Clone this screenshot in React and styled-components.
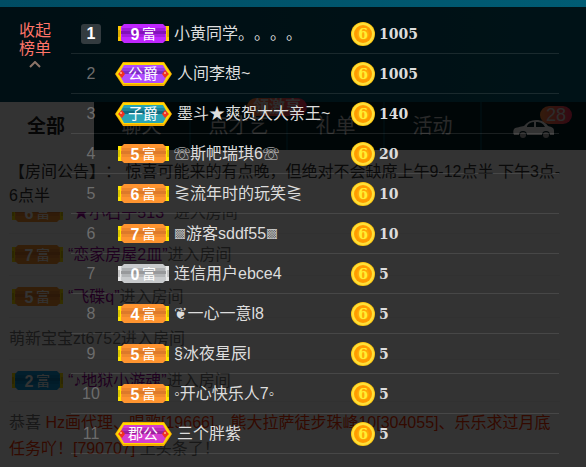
import React, { useState } from "react";
import styled, { createGlobalStyle } from "styled-components";

const ranking = [
  { badge: "purple", level: "9", name: "小黄同学。。。。", coins: 1005 },
  { badge: "violet", title: "公爵", name: "人间李想~", coins: 1005 },
  { badge: "teal", title: "子爵", name: "墨斗★爽贺大大亲王~", coins: 140 },
  { badge: "orange", level: "5", name: "斯帊瑞琪6", mark: "☏", coins: 20 },
  { badge: "orange", level: "6", name: "流年时的玩笑", mark: "⋛", coins: 10 },
  {
    badge: "orange",
    level: "7",
    name: "游客sddf55",
    mark: "▩",
    small: true,
    coins: 10,
  },
  { badge: "silver", level: "0", name: "连信用户ebce4", coins: 5 },
  { badge: "orange", level: "4", name: "❦一心一意l8", coins: 5 },
  { badge: "orange", level: "5", name: "§冰夜星辰l", coins: 5 },
  { badge: "orange", level: "5", name: "开心快乐人7", mark: "◦", coins: 5 },
  { badge: "magenta", title: "郡公", name: "三个胖紫", coins: 5 },
];

const notice =
  "【房间公告】\uFF1A 惊喜可能来的有点晚\uFF0C但绝对不会缺席上午9-12点半 下午3点-";

const headline =
  "Hz画代理、唱歌[19666]、熊大拉萨徒步珠峰10[304055]、乐乐求过月底任务吖\uFF01[790707]";

const messages = [
  { badge: "orange", level: "6", name: "★小石子513", space: true },
  { badge: "orange", level: "7", name: "恋家房屋2皿" },
  { badge: "orange", level: "5", name: "飞碟q" },
  { guest: "萌新宝宝zt6752" },
  { badge: "blue", level: "2", name: "♪地狱小游魂" },
];

const palette = {
  purple: { base: "#c026ff", dark: "#7d10b4", side: "#ffc800" },
  orange: { base: "#ff9430", dark: "#d9772a", side: "#ffe600" },
  silver: { base: "#c8cacc", dark: "#929496", side: "#e8e8e8" },
  blue: { base: "#0a9be0", dark: "#0679b4", side: "#ffe600" },
  violet: { base: "#b04cff", dark: "#7a2cc4" },
  teal: { base: "#2aa3b4", dark: "#0f6c80" },
  magenta: { base: "#d63ccf", dark: "#9c1f9c" },
};

const LevelBadge = ({ color, level }) => {
  const c = palette[color];
  return (
    <StLevel viewBox="0 0 51 19">
      <rect x="0" y="2" width="6" height="15" fill={c.side} />
      <rect x="45" y="2" width="6" height="15" fill={c.side} />
      <rect x="0" y="6" width="2" height="7" fill="#000" opacity="0.15" />
      <rect x="49" y="6" width="2" height="7" fill="#000" opacity="0.15" />
      <path d="M6 0H45L48 3V16L45 19H6L3 16V3Z" fill={c.base} />
      <path d="M4 4H47V7H4Z" fill={c.dark} opacity="0.5" />
      <path d="M3 7H48V10H3Z" fill={c.dark} opacity="0.9" />
      <path d="M4 10H47V13H4Z" fill={c.dark} opacity="0.4" />
      <StLevelText x="17" y="16">
        {level}
      </StLevelText>
      <StBadgeText x="31" y="15" $size={14}>
        富
      </StBadgeText>
    </StLevel>
  );
};

const TitleBadge = ({ color, title }) => {
  const c = palette[color];
  return (
    <StTitle viewBox="0 0 57 24">
      <path d="M8 0H49L57 12L49 24H8L0 12Z" fill="#f5a800" />
      <path d="M8 1H49L56 12L49 22H8L1 12Z" fill="#ffd900" />
      <path d="M9 3H48L53 12L48 21H9L4 12Z" fill={c.base} />
      <path d="M8 6H49L51 9H6Z" fill={c.dark} opacity="0.5" />
      <path d="M6 9H51L52 12H5Z" fill={c.dark} />
      <path d="M7 8L10 12L7 16L3 12Z" fill="#f0321e" />
      <path d="M50 8L54 12L50 16L47 12Z" fill="#f0321e" />
      <circle cx="6" cy="11" r="1" fill="#ffb0a0" />
      <circle cx="50" cy="11" r="1" fill="#ffb0a0" />
      <StBadgeText x="28" y="17" $size={15}>
        {title}
      </StBadgeText>
    </StTitle>
  );
};

const Coin = () => (
  <StCoin viewBox="0 0 24 24">
    <circle cx="12" cy="12" r="12" fill="#ffc814" />
    <circle cx="12" cy="12" r="11" fill="#ffe13a" />
    <circle cx="12" cy="12" r="9" fill="#ff9a00" />
    <circle cx="12" cy="12" r="6" fill="#ffa808" />
    <StCoinText x="12" y="17">
      6
    </StCoinText>
  </StCoin>
);

const Car = () => (
  <StCar viewBox="0 0 42 18">
    <path
      d="M1 9C3 7 8 7 11 6C14 2 18 0 23 0C29 0 32 2 35 6C39 7 41 8 41 11V15H37A4 4 0 0 0 29 15H14A4 4 0 0 0 6 15H1C0 13 0 11 1 9Z"
      fill="#fff"
    />
    <path d="M14 6C16 3 18 2 21 2V7H14Z" fill="#001e26" />
    <path d="M23 2C27 2 30 3 32 7H23Z" fill="#001e26" />
    <circle cx="10" cy="15" r="3" fill="#bbb" />
    <circle cx="33" cy="15" r="3" fill="#bbb" />
  </StCar>
);

const App = () => {
  const [open, setOpen] = useState(true);

  return (
    <>
      <GlobalStyle />
      <StPage>
        <StBanner />
        <StTabs>
          <StTab $active>全部</StTab>
          <StTab>聊天</StTab>
          <StTab>
            点才艺
            <StHot>领激享</StHot>
          </StTab>
          <StTab>礼单</StTab>
          <StTab>活动</StTab>
          <StTab aria-label="座驾">
            <Car />
            <StCount>28</StCount>
          </StTab>
        </StTabs>
        <StNotice>
          {notice}
          <wbr />
          6点半
        </StNotice>
        <StChat>
          {messages.map((m) => (
            <StMessage key={m.name || m.guest}>
              {m.badge && <LevelBadge color={m.badge} level={m.level} />}
              {m.name && <StSender>“{m.name}”</StSender>}
              <span>
                {m.space && " "}
                {m.guest}进入房间
              </span>
            </StMessage>
          ))}
          <StHeadline>
            恭喜 <StRed>{headline}</StRed> {"上头条了\uFF01"}
          </StHeadline>
        </StChat>

        <StOverlay $open={open}>
          <StToggle onClick={() => setOpen(!open)}>
            收起
            <br />
            榜单
            <StArrow viewBox="0 0 12 7">
              <path d="M1 6L6 1L11 6" />
            </StArrow>
          </StToggle>
          {open && (
            <StList>
              {ranking.map((r, i) => (
                <StRow key={r.name}>
                  <StRank $first={i === 0}>{i + 1}</StRank>
                  <StUser>
                    {r.title ? (
                      <TitleBadge color={r.badge} title={r.title} />
                    ) : (
                      <LevelBadge color={r.badge} level={r.level} />
                    )}
                    <StName>
                      {r.mark && <StMark $small={r.small}>{r.mark}</StMark>}
                      {r.name}
                      {r.mark && <StMark $small={r.small}>{r.mark}</StMark>}
                    </StName>
                  </StUser>
                  <StGift>
                    <Coin />
                    {r.coins}
                  </StGift>
                </StRow>
              ))}
            </StList>
          )}
        </StOverlay>
      </StPage>
    </>
  );
};

export default App;

const GlobalStyle = createGlobalStyle`
  * {
    box-sizing: border-box;
  }
  body {
    margin: 0;
    font-family: "Liberation Sans", "Noto Sans CJK SC", "DejaVu Sans", sans-serif;
    font-size: 16px;
    text-spacing-trim: space-all;
  }
  button {
    font-family: inherit;
    border: 0;
    padding: 0;
    cursor: pointer;
  }
`;

const StPage = styled.div`
  position: relative;
  display: flex;
  flex-direction: column;
  height: 100vh;
  overflow: hidden;
  background-color: #fff;
`;

const StBanner = styled.div`
  flex: none;
  height: 102px;
  background-image: linear-gradient(to right, #004c63, #005c74);
`;

const StTabs = styled.nav`
  flex: none;
  display: grid;
  grid-template-columns: 94fr repeat(4, 97fr) 104fr;
  height: 48px;
  background-color: #001e26;
`;

const StTab = styled.button`
  position: relative;
  display: flex;
  align-items: center;
  justify-content: center;
  padding-bottom: 3px;
  font-size: ${(props) => (props.$active ? "19px" : "20px")};
  font-weight: ${(props) => (props.$active ? 700 : 400)};
  color: ${(props) => (props.$active ? "#222" : "#ccc")};
  background-color: ${(props) => (props.$active ? "#fff" : "transparent")};
  border-right: 2px solid ${(props) => (props.$active ? "#fff" : "#003c4b")};

  &:last-child {
    border-right: 0;
  }
`;

const StTag = styled.span`
  position: absolute;
  color: #ddd;
  border-radius: 9px;
  background-image: linear-gradient(to right, #ff8a3c, #ff2c5e);
`;

const StHot = styled(StTag)`
  top: -4px;
  left: 56px;
  width: 60px;
  font-size: 16px;
  font-weight: 700;
  line-height: 18px;
`;

const StCount = styled(StTag)`
  top: 4px;
  right: 14px;
  width: 32px;
  font-size: 18px;
  line-height: 18px;
`;

const StCar = styled.svg`
  width: 42px;
  height: 18px;
  margin-top: 8px;
`;

const StNotice = styled.p`
  flex: none;
  margin: 0;
  padding: 10px 18px 4px 9px;
  line-height: 24px;
  color: #333;
`;

const StChat = styled.div`
  flex: 1;
  min-height: 0;
  display: flex;
  flex-direction: column;
  justify-content: flex-end;
  overflow: hidden;
  padding: 0 26px 5px 9px;
  color: #777;
`;

const StMessage = styled.div`
  flex: none;
  display: flex;
  align-items: center;
  height: 42px;
  line-height: 26px;
  white-space: pre;
  border-bottom: 1px solid #f4f4f4;
`;

const StSender = styled.span`
  margin-left: 5px;
  color: #909;
`;

const StHeadline = styled.p`
  flex: none;
  margin: 0;
  padding-top: 8px;
  line-height: 26px;
`;

const StRed = styled.span`
  color: #f30;
`;

/* 榜单 */
const StOverlay = styled.section`
  position: absolute;
  top: 7px;
  left: 0;
  right: 0;
  bottom: ${(props) => (props.$open ? "0" : "auto")};
  display: flex;
  align-items: flex-start;
  padding: 7px 27px 0 0;
  background-color: rgba(0, 0, 0, 0.8);
`;

const StToggle = styled.button`
  flex: none;
  width: 70px;
  padding-top: 8px;
  font-size: 16px;
  line-height: 18px;
  color: #ff7468;
  background: none;
`;

const StArrow = styled.svg`
  display: block;
  width: 12px;
  height: 7px;
  margin: 3px auto 0;
  fill: none;
  stroke: #8c7468;
  stroke-width: 2;
`;

const StList = styled.ol`
  flex: 1;
  min-width: 0;
  margin: 0;
  padding: 0 0 0 1px;
  list-style: none;
`;

const StRow = styled.li`
  display: grid;
  grid-template-columns: 40px minmax(0, 1fr) 208px;
  align-items: center;
  height: 40px;
  border-bottom: 1px solid rgba(255, 255, 255, 0.1);
`;

const StRank = styled.span`
  justify-self: center;
  width: 20px;
  line-height: 20px;
  border-radius: 3px;
  display: flex;
  justify-content: center;
  font-weight: ${(props) => (props.$first ? 700 : 400)};
  color: ${(props) => (props.$first ? "#fff" : "#6c6c6c")};
  background-color: ${(props) => (props.$first ? "#333b3f" : "transparent")};
`;

const StLevel = styled.svg`
  flex: none;
  width: 51px;
  height: 19px;
  margin-left: 3px;
`;

const StTitle = styled.svg`
  flex: none;
  width: 57px;
  height: 24px;
`;

const StBadgeText = styled.text`
  font-size: ${(props) => props.$size}px;
  font-weight: 400;
  text-anchor: middle;
  fill: #fff;
`;

const StLevelText = styled.text`
  font-size: 16px;
  font-weight: 700;
  text-anchor: middle;
  fill: #fff;
`;

const StUser = styled.div`
  display: flex;
  align-items: center;
  gap: 5px;
  padding-left: 4px;
`;

const StName = styled.span`
  padding-bottom: 3px;
  white-space: nowrap;
  color: #ddd;
`;

const StMark = styled.span`
  font-size: ${(props) => (props.$small ? "12px" : "16px")};
`;

const StGift = styled.div`
  display: flex;
  align-items: center;
  gap: 4px;
  font-family: Georgia, "DejaVu Serif", serif;
  font-size: 14px;
  font-weight: 700;
  line-height: 20px;
  color: #ddd;
`;

const StCoin = styled.svg`
  width: 24px;
  height: 24px;
`;

const StCoinText = styled.text`
  font-family: "DejaVu Serif", serif;
  font-size: 14px;
  font-weight: 700;
  text-anchor: middle;
  fill: #ffee32;
`;
